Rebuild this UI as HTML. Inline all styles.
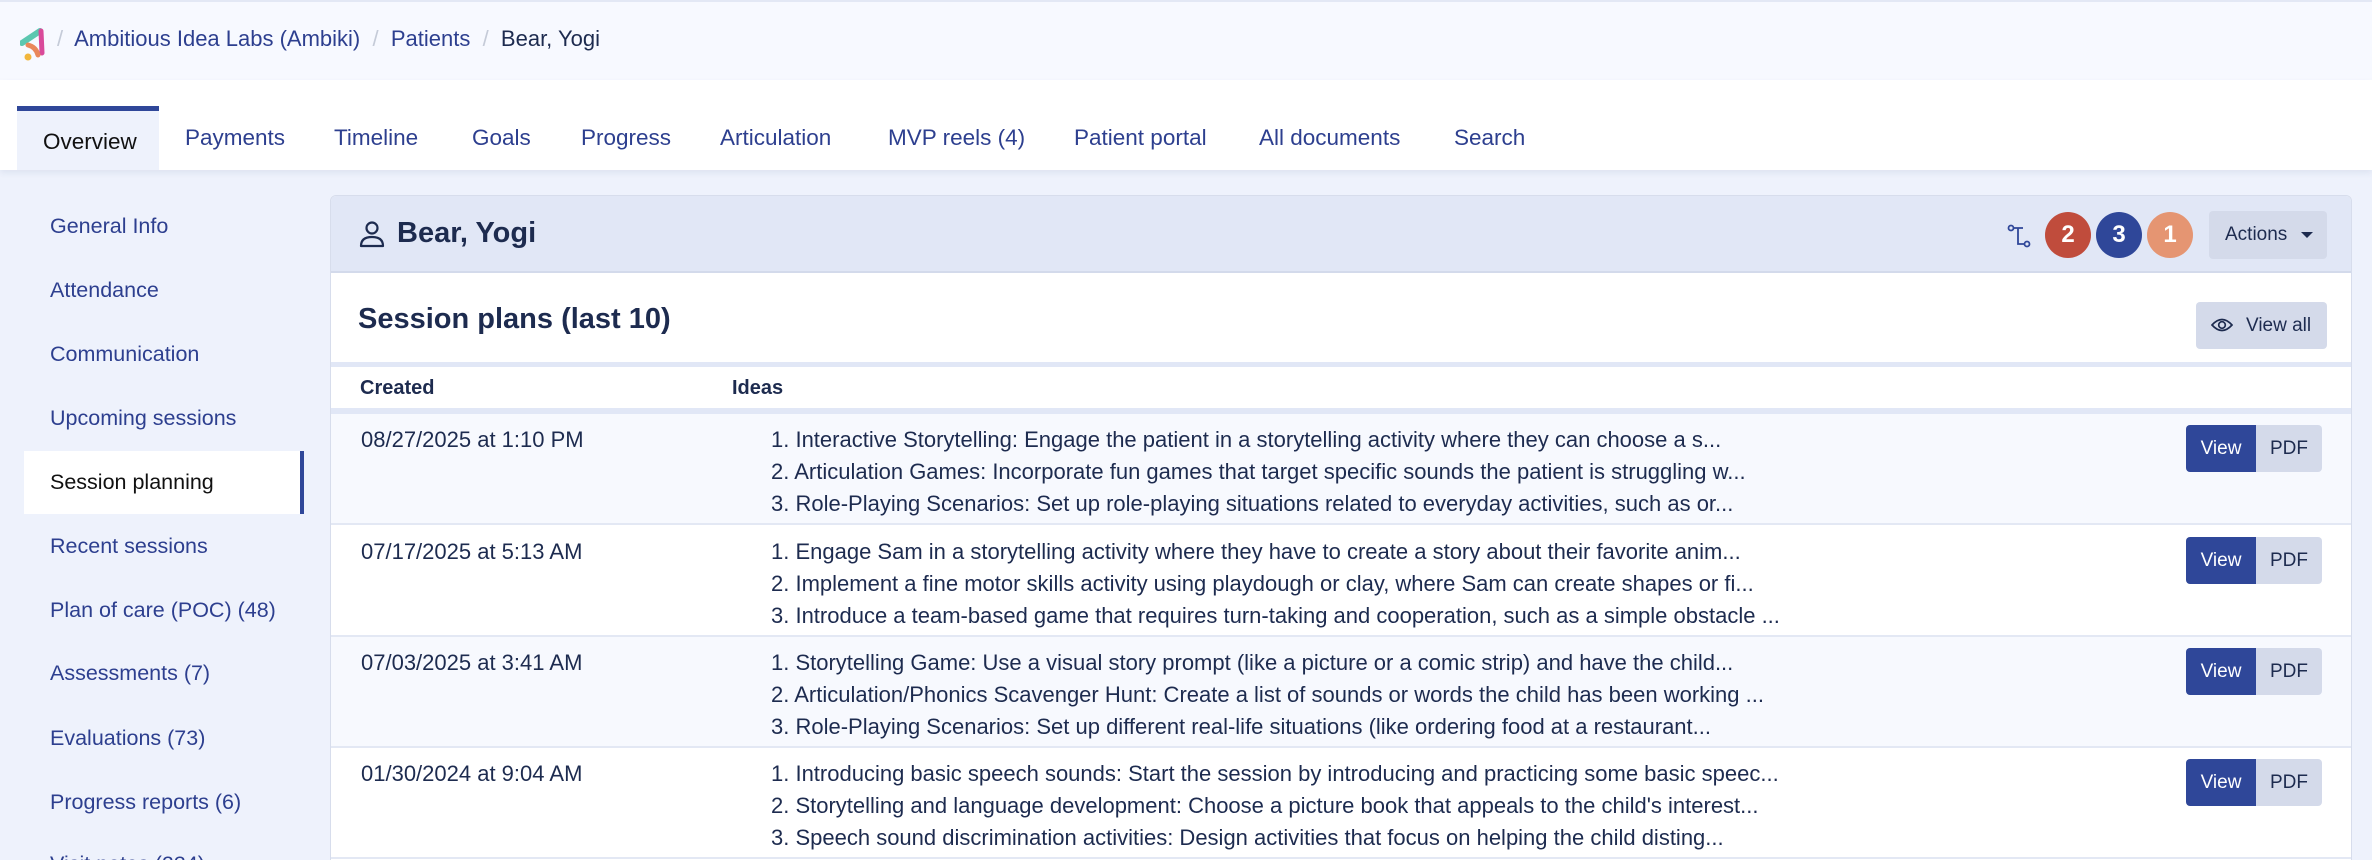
<!DOCTYPE html>
<html><head><meta charset="utf-8"><style>
*{box-sizing:border-box;margin:0;padding:0}
html{width:2372px;height:860px;overflow:hidden}
body{width:2372px;height:860px;overflow:hidden;background:#eef2fc;font-family:"Liberation Sans",sans-serif;color:#1d2b4f;position:relative}
.a{position:absolute;white-space:nowrap}
.top{left:0;top:0;width:2372px;height:80px;background:#f7f9ff;border-top:2px solid #e3e8f5}
.bc{top:26px;font-size:22px;color:#2d3f8f}
.sep{color:#c5cbd8}
.tabs{left:0;top:80px;width:2372px;height:90px;background:#fff;box-shadow:0 3px 6px rgba(40,60,120,.08)}
.tab{top:125px;font-size:22.5px;color:#2d3f8f}
.side{left:50px;font-size:21.5px;color:#2d3f8f}
.card{left:330px;top:195px;width:2022px;height:700px;background:#fff;border:1px solid #d7ddec;border-radius:6px;overflow:hidden}
.ch{left:0;top:0;width:2022px;height:77px;background:#e1e7f6;border-bottom:2px solid #d3daeb}
.b{width:46px;height:46px;border-radius:50%;color:#fff;font-weight:bold;font-size:24px;text-align:center;line-height:46px;top:16px}
.btn{background:#d4daea;border-radius:4px;font-size:19px;color:#1d2b4f}
.row{left:0;width:2022px;height:111px;border-bottom:2px solid #e3e8f4}
.d{left:30px;top:13px;font-size:22px}
.i{left:440px;font-size:22px}
.v{left:1855px;top:11px;width:70px;height:47px;background:#2f4799;color:#fff;font-size:19px;line-height:47px;text-align:center;border-radius:4px 0 0 4px}
.p{left:1925px;top:11px;width:66px;height:47px;background:#d4daea;color:#1d2b4f;font-size:19px;line-height:47px;text-align:center;border-radius:0 4px 4px 0}
</style></head><body>
<div class="a top"></div>
<svg class="a" style="left:20px;top:27px" width="26" height="34" viewBox="0 0 26 34"><path d="M2 16 L20 4" stroke="#5cc7b0" stroke-width="6" stroke-linecap="round"/><path d="M21 4 L22 26" stroke="#d94a9a" stroke-width="5" stroke-linecap="round"/><path d="M8 18 Q16 20 18 28" stroke="#e9875a" stroke-width="5" fill="none" stroke-linecap="round"/><circle cx="8" cy="30" r="3.5" fill="#f2b63c"/></svg>
<div class="a bc" style="left:57px"><span class="sep">/</span>&nbsp; Ambitious Idea Labs (Ambiki) &nbsp;<span class="sep">/</span>&nbsp; Patients &nbsp;<span class="sep">/</span>&nbsp; <span style="color:#1d2b4f">Bear, Yogi</span></div>
<div class="a tabs"></div>
<div class="a" style="left:17px;top:106px;width:142px;height:64px;background:#eef2fc;border-top:5px solid #2f4799"></div>
<div class="a tab" style="left:43px;top:129px;color:#111">Overview</div>
<div class="a tab" style="left:185px">Payments</div>
<div class="a tab" style="left:334px">Timeline</div>
<div class="a tab" style="left:472px">Goals</div>
<div class="a tab" style="left:581px">Progress</div>
<div class="a tab" style="left:720px">Articulation</div>
<div class="a tab" style="left:888px">MVP reels (4)</div>
<div class="a tab" style="left:1074px">Patient portal</div>
<div class="a tab" style="left:1259px">All documents</div>
<div class="a tab" style="left:1454px">Search</div>
<div class="a" style="left:24px;top:451px;width:280px;height:63px;background:#fff;border-right:4px solid #2f4799"></div>
<div class="a side" style="top:214px">General Info</div>
<div class="a side" style="top:278px">Attendance</div>
<div class="a side" style="top:342px">Communication</div>
<div class="a side" style="top:406px">Upcoming sessions</div>
<div class="a side" style="top:470px;color:#111">Session planning</div>
<div class="a side" style="top:534px">Recent sessions</div>
<div class="a side" style="top:598px">Plan of care (POC) (48)</div>
<div class="a side" style="top:661px">Assessments (7)</div>
<div class="a side" style="top:726px">Evaluations (73)</div>
<div class="a side" style="top:790px">Progress reports (6)</div>
<div class="a side" style="top:852px">Visit notes (234)</div>
<div class="a card">
<div class="a ch"></div>
<svg class="a" style="left:28px;top:24px" width="26" height="28" viewBox="0 0 26 28"><circle cx="13" cy="8" r="5.5" fill="none" stroke="#1d2b4f" stroke-width="2.2"/><path d="M2 26 Q2 17 13 17 Q24 17 24 26 Z" fill="none" stroke="#1d2b4f" stroke-width="2.2" stroke-linejoin="round"/></svg>
<div class="a" style="left:66px;top:21px;font-size:29px;font-weight:bold">Bear, Yogi</div>
<svg class="a" style="left:1676px;top:28px" width="24" height="24" viewBox="0 0 24 24" fill="none" stroke="#2f4799" stroke-width="1.8"><circle cx="4" cy="4" r="2.5"/><circle cx="20" cy="20" r="2.5"/><path d="M6.5 4H16M11 4V20H17.5"/></svg>
<div class="a b" style="left:1714px;background:#c04c3c">2</div>
<div class="a b" style="left:1765px;background:#2f4799">3</div>
<div class="a b" style="left:1816px;background:#e59572">1</div>
<div class="a btn" style="left:1878px;top:15px;width:118px;height:48px;line-height:48px;padding-left:16px">Actions <span style="display:inline-block;border:6px solid transparent;border-top:6px solid #1d2b4f;border-bottom:0;vertical-align:middle;margin-left:8px"></span></div>
<div class="a" style="left:27px;top:107px;font-size:29px;font-weight:bold">Session plans (last 10)</div>
<div class="a btn" style="left:1865px;top:106px;width:131px;height:47px;line-height:47px;padding-left:50px">View all</div>
<svg class="a" style="left:1880px;top:121px" width="22" height="16" viewBox="0 0 22 16" fill="none" stroke="#1d2b4f" stroke-width="1.7"><path d="M1 8 Q11 -3 21 8 Q11 19 1 8Z"/><circle cx="11" cy="8" r="3.3"/></svg>
<div class="a" style="left:0;top:166px;width:2022px;height:5px;background:#e1e7f6"></div>
<div class="a" style="left:29px;top:181px;font-size:20px;font-weight:bold">Created</div>
<div class="a" style="left:401px;top:181px;font-size:20px;font-weight:bold">Ideas</div>
<div class="a" style="left:0;top:212px;width:2022px;height:6px;background:#e1e7f6"></div>
<div class="a row" style="top:218px;background:#f7f9fe">
<div class="a d">08/27/2025 at 1:10 PM</div>
<div class="a i" style="top:13px">1. Interactive Storytelling: Engage the patient in a storytelling activity where they can choose a s...</div>
<div class="a i" style="top:45px">2. Articulation Games: Incorporate fun games that target specific sounds the patient is struggling w...</div>
<div class="a i" style="top:77px">3. Role-Playing Scenarios: Set up role-playing situations related to everyday activities, such as or...</div>
<div class="a v">View</div><div class="a p">PDF</div></div>
<div class="a row" style="top:330px;background:#fff">
<div class="a d">07/17/2025 at 5:13 AM</div>
<div class="a i" style="top:13px">1. Engage Sam in a storytelling activity where they have to create a story about their favorite anim...</div>
<div class="a i" style="top:45px">2. Implement a fine motor skills activity using playdough or clay, where Sam can create shapes or fi...</div>
<div class="a i" style="top:77px">3. Introduce a team-based game that requires turn-taking and cooperation, such as a simple obstacle ...</div>
<div class="a v">View</div><div class="a p">PDF</div></div>
<div class="a row" style="top:441px;background:#f7f9fe">
<div class="a d">07/03/2025 at 3:41 AM</div>
<div class="a i" style="top:13px">1. Storytelling Game: Use a visual story prompt (like a picture or a comic strip) and have the child...</div>
<div class="a i" style="top:45px">2. Articulation/Phonics Scavenger Hunt: Create a list of sounds or words the child has been working ...</div>
<div class="a i" style="top:77px">3. Role-Playing Scenarios: Set up different real-life situations (like ordering food at a restaurant...</div>
<div class="a v">View</div><div class="a p">PDF</div></div>
<div class="a row" style="top:552px;background:#fff">
<div class="a d">01/30/2024 at 9:04 AM</div>
<div class="a i" style="top:13px">1. Introducing basic speech sounds: Start the session by introducing and practicing some basic speec...</div>
<div class="a i" style="top:45px">2. Storytelling and language development: Choose a picture book that appeals to the child's interest...</div>
<div class="a i" style="top:77px">3. Speech sound discrimination activities: Design activities that focus on helping the child disting...</div>
<div class="a v">View</div><div class="a p">PDF</div></div>
</div>
</body></html>
